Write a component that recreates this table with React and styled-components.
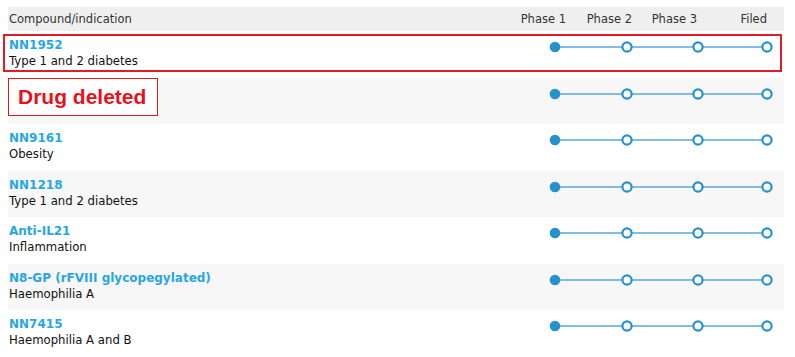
import styled, { createGlobalStyle } from 'styled-components'
import * as React from 'react'

const blue = '#2592cb'
const line = '#5aa9d6'

const GlobalStyle = createGlobalStyle`
  body {
    margin: 0;
    background: #fff;
    font-family: 'DejaVu Sans', Verdana, sans-serif;
    color: #222;
  }
`

const Table = styled.div`
  padding: 7px 11px 0 8px;
`

const HeaderRow = styled.div`
  display: flex;
  align-items: center;
  height: 24px;
  background: #efefef;
  font-size: 11.5px;
  color: #333;
`

const HeaderLabel = styled.span`
  flex: 1;
  padding-left: 1px;
`

const PhaseLabels = styled.div`
  display: grid;
  grid-template-columns: 66px 66px 65px 70px;
  justify-items: end;
  margin-right: 17px;
`

const Row = styled.div`
  position: relative;
  display: flex;
  align-items: flex-start;
  height: 46.5px;
  background: ${p => (p.$shade ? '#f7f7f7' : '#fff')};
`

const Compound = styled.div`
  flex: 1;
  padding: 6px 0 0 1px;
  line-height: 16px;
`

const Name = styled.div`
  font-weight: bold;
  font-size: 12px;
  color: #27a6e2;
`

const Indication = styled.div`
  font-size: 11.7px;
  color: #111;
`

const DeletedTag = styled.div`
  width: 139px;
  height: 36px;
  padding-left: 9px;
  display: flex;
  align-items: center;
  border: 1px solid #d91c24;
  background: #fff;
  font-family: 'Liberation Sans', Arial, sans-serif;
  font-weight: bold;
  font-size: 21px;
  color: #e5121b;
`

const Highlight = styled.div`
  position: absolute;
  left: -5px;
  top: 3px;
  width: 775px;
  height: 34px;
  border: 2px solid #e21b24;
  pointer-events: none;
`

const TrackSvg = styled.svg`
  display: block;
  margin: 6px 7px 0 0;
  flex: none;
`

const dots = [10, 82, 153, 222]

const Track = ({ reached = 1 }) => (
  <TrackSvg width="232" height="20" viewBox="0 0 232 20">
    <line x1="10" y1="10" x2="222" y2="10" stroke={line} strokeWidth="1.6" />
    {dots.map((x, i) =>
      i < reached
        ? <circle key={x} cx={x} cy="10" r="5.3" fill={blue} />
        : <circle key={x} cx={x} cy="10" r="4.6" fill="#fff" stroke={blue} strokeWidth="2.2" />
    )}
  </TrackSvg>
)

const rows = [
  { name: 'NN1952', indication: 'Type 1 and 2 diabetes', highlight: true },
  { deleted: true },
  { name: 'NN9161', indication: 'Obesity' },
  { name: 'NN1218', indication: 'Type 1 and 2 diabetes' },
  { name: 'Anti-IL21', indication: 'Inflammation' },
  { name: 'N8-GP (rFVIII glycopegylated)', indication: 'Haemophilia A' },
  { name: 'NN7415', indication: 'Haemophilia A and B' }
]

export default function App () {
  return (
    <>
      <GlobalStyle />
      <Table>
        <HeaderRow>
          <HeaderLabel>Compound/indication</HeaderLabel>
          <PhaseLabels>
            <span>Phase 1</span>
            <span>Phase 2</span>
            <span>Phase 3</span>
            <span>Filed</span>
          </PhaseLabels>
        </HeaderRow>
        {rows.map((r, i) => (
          <Row key={i} $shade={i % 2 === 1}>
            {r.deleted
              ? <Compound style={{ padding: 0 }}><DeletedTag>Drug deleted</DeletedTag></Compound>
              : (
                <Compound>
                  <Name>{r.name}</Name>
                  <Indication>{r.indication}</Indication>
                </Compound>
                )}
            <Track />
            {r.highlight && <Highlight />}
          </Row>
        ))}
      </Table>
    </>
  )
}
